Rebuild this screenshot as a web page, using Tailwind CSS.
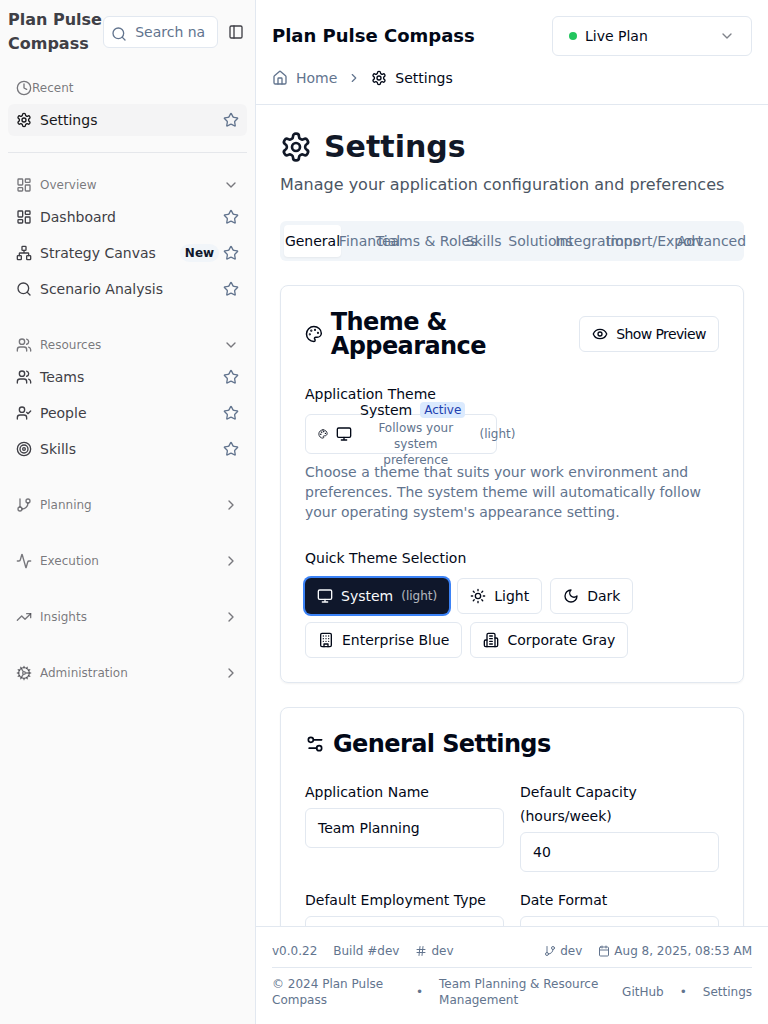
<!DOCTYPE html>
<html lang="en">
<head>
<meta charset="utf-8">
<title>Plan Pulse Compass</title>
<script src="https://cdn.jsdelivr.net/npm/@tailwindcss/browser@4"></script>
</head>
<body class="flex h-[1024px] w-[768px] overflow-hidden bg-white font-['DejaVu_Sans',sans-serif] text-sm text-[#020817]">
<svg class="hidden">
  <symbol id="gear" viewBox="0 0 24 24"><path d="M12.22 2h-.44a2 2 0 0 0-2 2v.18a2 2 0 0 1-1 1.73l-.43.25a2 2 0 0 1-2 0l-.15-.08a2 2 0 0 0-2.73.73l-.22.38a2 2 0 0 0 .73 2.73l.15.1a2 2 0 0 1 1 1.72v.51a2 2 0 0 1-1 1.74l-.15.09a2 2 0 0 0-.73 2.73l.22.38a2 2 0 0 0 2.73.73l.15-.08a2 2 0 0 1 2 0l.43.25a2 2 0 0 1 1 1.73V20a2 2 0 0 0 2 2h.44a2 2 0 0 0 2-2v-.18a2 2 0 0 1 1-1.73l.43-.25a2 2 0 0 1 2 0l.15.08a2 2 0 0 0 2.73-.73l.22-.39a2 2 0 0 0-.73-2.73l-.15-.08a2 2 0 0 1-1-1.74v-.5a2 2 0 0 1 1-1.74l.15-.09a2 2 0 0 0 .73-2.73l-.22-.38a2 2 0 0 0-2.73-.73l-.15.08a2 2 0 0 1-2 0l-.43-.25a2 2 0 0 1-1-1.73V4a2 2 0 0 0-2-2z"/><circle cx="12" cy="12" r="3"/></symbol>
  <symbol id="search" viewBox="0 0 24 24"><circle cx="11" cy="11" r="8"/><path d="m21 21-4.3-4.3"/></symbol>
  <symbol id="panel" viewBox="0 0 24 24"><rect width="18" height="18" x="3" y="3" rx="2"/><path d="M9 3v18"/></symbol>
  <symbol id="clock" viewBox="0 0 24 24"><circle cx="12" cy="12" r="10"/><path d="M12 6v6l4 2"/></symbol>
  <symbol id="star" viewBox="0 0 24 24"><path d="M11.525 2.295a.53.53 0 0 1 .95 0l2.31 4.679a2.123 2.123 0 0 0 1.595 1.16l5.166.756a.53.53 0 0 1 .294.904l-3.736 3.638a2.123 2.123 0 0 0-.611 1.878l.882 5.14a.53.53 0 0 1-.771.56l-4.618-2.428a2.122 2.122 0 0 0-1.973 0L6.396 21.01a.53.53 0 0 1-.77-.56l.881-5.139a2.122 2.122 0 0 0-.611-1.879L2.16 9.795a.53.53 0 0 1 .294-.906l5.165-.755a2.122 2.122 0 0 0 1.597-1.16z"/></symbol>
  <symbol id="dashboard" viewBox="0 0 24 24"><rect width="7" height="9" x="3" y="3" rx="1"/><rect width="7" height="5" x="14" y="3" rx="1"/><rect width="7" height="9" x="14" y="12" rx="1"/><rect width="7" height="5" x="3" y="16" rx="1"/></symbol>
  <symbol id="network" viewBox="0 0 24 24"><rect x="16" y="16" width="6" height="6" rx="1"/><rect x="2" y="16" width="6" height="6" rx="1"/><rect x="9" y="2" width="6" height="6" rx="1"/><path d="M5 16v-3a1 1 0 0 1 1-1h12a1 1 0 0 1 1 1v3M12 12V8"/></symbol>
  <symbol id="users" viewBox="0 0 24 24"><path d="M16 21v-2a4 4 0 0 0-4-4H6a4 4 0 0 0-4 4v2"/><circle cx="9" cy="7" r="4"/><path d="M22 21v-2a4 4 0 0 0-3-3.87M16 3.13a4 4 0 0 1 0 7.75"/></symbol>
  <symbol id="usercheck" viewBox="0 0 24 24"><path d="M16 21v-2a4 4 0 0 0-4-4H6a4 4 0 0 0-4 4v2"/><circle cx="9" cy="7" r="4"/><path d="m16 11 2 2 4-4"/></symbol>
  <symbol id="target" viewBox="0 0 24 24"><circle cx="12" cy="12" r="10"/><circle cx="12" cy="12" r="6"/><circle cx="12" cy="12" r="2"/></symbol>
  <symbol id="branch" viewBox="0 0 24 24"><path d="M6 3v12"/><circle cx="18" cy="6" r="3"/><circle cx="6" cy="18" r="3"/><path d="M18 9a9 9 0 0 1-9 9"/></symbol>
  <symbol id="activity" viewBox="0 0 24 24"><path d="M22 12h-2.48a2 2 0 0 0-1.93 1.46l-2.35 8.36a.25.25 0 0 1-.48 0L9.24 2.18a.25.25 0 0 0-.48 0l-2.35 8.36A2 2 0 0 1 4.49 12H2"/></symbol>
  <symbol id="trend" viewBox="0 0 24 24"><path d="m22 7-8.500 8.500-5-5L2 17"/><path d="M16 7h6v6"/></symbol>
  <symbol id="cog" viewBox="0 0 24 24"><path d="M12 20a8 8 0 1 0 0-16 8 8 0 0 0 0 16Z"/><path d="M12 14a2 2 0 1 0 0-4 2 2 0 0 0 0 4ZM12 2v2M12 22v-2M17 20.660l-1-1.730M11 10.270 7 3.340M20.660 17l-1.730-1M3.340 7l1.730 1M14 12h8M2 12h2M20.660 7l-1.730 1M3.340 17l1.730-1M17 3.340l-1 1.730M11 13.730l-4 6.930"/></symbol>
  <symbol id="down" viewBox="0 0 24 24"><path d="m6 9 6 6 6-6"/></symbol>
  <symbol id="right" viewBox="0 0 24 24"><path d="m9 18 6-6-6-6"/></symbol>
  <symbol id="house" viewBox="0 0 24 24"><path d="M15 21v-8a1 1 0 0 0-1-1h-4a1 1 0 0 0-1 1v8"/><path d="M3 10a2 2 0 0 1 .709-1.528l7-5.999a2 2 0 0 1 2.582 0l7 5.999A2 2 0 0 1 21 10v9a2 2 0 0 1-2 2H5a2 2 0 0 1-2-2z"/></symbol>
  <symbol id="palette" viewBox="0 0 24 24"><circle cx="13.500" cy="6.500" r=".5" fill="currentColor"/><circle cx="17.500" cy="10.500" r=".5" fill="currentColor"/><circle cx="8.500" cy="7.500" r=".5" fill="currentColor"/><circle cx="6.500" cy="12.500" r=".5" fill="currentColor"/><path d="M12 2C6.500 2 2 6.500 2 12s4.500 10 10 10c.926 0 1.648-.746 1.648-1.688 0-.437-.18-.835-.437-1.125-.29-.289-.438-.652-.438-1.125a1.640 1.640 0 0 1 1.668-1.668h1.996c3.051 0 5.555-2.503 5.555-5.554C21.965 6.012 17.461 2 12 2z"/></symbol>
  <symbol id="eye" viewBox="0 0 24 24"><path d="M2.062 12.348a1 1 0 0 1 0-.696 10.750 10.750 0 0 1 19.876 0 1 1 0 0 1 0 .696 10.750 10.750 0 0 1-19.876 0"/><circle cx="12" cy="12" r="3"/></symbol>
  <symbol id="monitor" viewBox="0 0 24 24"><rect width="20" height="14" x="2" y="3" rx="2"/><path d="M8 21h8M12 17v4"/></symbol>
  <symbol id="sun" viewBox="0 0 24 24"><circle cx="12" cy="12" r="4"/><path d="M12 2v2M12 20v2M4.930 4.930l1.410 1.410M17.660 17.660l1.410 1.410M2 12h2M20 12h2M6.340 17.660l-1.410 1.410M19.070 4.930l-1.410 1.410"/></symbol>
  <symbol id="moon" viewBox="0 0 24 24"><path d="M12 3a6 6 0 0 0 9 9 9 9 0 1 1-9-9Z"/></symbol>
  <symbol id="building" viewBox="0 0 24 24"><rect width="16" height="20" x="4" y="2" rx="2"/><path d="M9 22v-4h6v4M8 6h.01M16 6h.01M12 6h.01M12 10h.01M12 14h.01M16 10h.01M16 14h.01M8 10h.01M8 14h.01"/></symbol>
  <symbol id="building2" viewBox="0 0 24 24"><path d="M6 22V4a2 2 0 0 1 2-2h8a2 2 0 0 1 2 2v18Z"/><path d="M6 12H4a2 2 0 0 0-2 2v6a2 2 0 0 0 2 2h2M18 9h2a2 2 0 0 1 2 2v9a2 2 0 0 1-2 2h-2M10 6h4M10 10h4M10 14h4M10 18h4"/></symbol>
  <symbol id="sliders" viewBox="0 0 24 24"><path d="M20 7h-9M14 17H5"/><circle cx="17" cy="17" r="3"/><circle cx="7" cy="7" r="3"/></symbol>
  <symbol id="hash" viewBox="0 0 24 24"><path d="M4 9h16M4 15h16M10 3 8 21M16 3l-2 18"/></symbol>
  <symbol id="calendar" viewBox="0 0 24 24"><path d="M8 2v4M16 2v4M3 10h18"/><rect width="18" height="18" x="3" y="4" rx="2"/></symbol>
</svg>

<aside class="flex w-64 shrink-0 flex-col border-r border-slate-200 bg-[#fafafa] px-2 pt-2 text-[#3f3f46] [&_svg]:size-4 [&_svg]:shrink-0 [&_svg]:fill-none [&_svg]:stroke-current [&_svg]:stroke-2 [&_svg]:[stroke-linecap:round] [&_svg]:[stroke-linejoin:round]">
  <div class="flex h-12 items-center">
    <h2 class="w-[95.200px] shrink-0 text-base font-bold leading-6">Plan Pulse Compass</h2>
    <div class="relative flex h-8 w-[114.800px] shrink-0 items-center rounded-md border border-slate-200 bg-white pl-[31px] pr-3 text-slate-500">
      <svg class="absolute left-[7px] top-[9px]"><use href="#search"/></svg>
      <span class="overflow-hidden whitespace-nowrap">Search navigation</span>
    </div>
    <button class="ml-1 flex size-7 shrink-0 items-center justify-center"><svg><use href="#panel"/></svg></button>
  </div>

  <div class="mt-4 flex h-8 items-center px-2 text-xs text-[#3f3f46]/70"><svg><use href="#clock"/></svg><span>Recent</span></div>
  <div class="flex h-8 items-center gap-2 rounded-md bg-[#f4f4f5] px-2 text-[#18181b]"><svg><use href="#gear"/></svg><span class="flex-1">Settings</span><svg class="text-slate-500"><use href="#star"/></svg></div>
  <div class="mt-4 h-px shrink-0 bg-[#e5e7eb]"></div>

  <nav class="mt-4 flex flex-col gap-6">
    <section>
      <div class="flex h-8 items-center gap-2 px-2 text-xs text-[#3f3f46]/70"><svg><use href="#dashboard"/></svg><span class="flex-1">Overview</span><svg><use href="#down"/></svg></div>
      <ul class="flex flex-col gap-1">
        <li class="flex h-8 items-center gap-2 px-2"><svg><use href="#dashboard"/></svg><span class="flex-1">Dashboard</span><svg class="text-slate-500"><use href="#star"/></svg></li>
        <li class="flex h-8 items-center gap-2 px-2"><svg><use href="#network"/></svg><span class="flex-1 whitespace-nowrap">Strategy Canvas</span><span class="-mr-1 flex h-[18px] w-[39px] items-center justify-center rounded-full bg-slate-100 text-xs font-bold text-slate-900">New</span><svg class="text-slate-500"><use href="#star"/></svg></li>
        <li class="flex h-8 items-center gap-2 px-2"><svg><use href="#search"/></svg><span class="flex-1">Scenario Analysis</span><svg class="text-slate-500"><use href="#star"/></svg></li>
      </ul>
    </section>
    <section>
      <div class="flex h-8 items-center gap-2 px-2 text-xs text-[#3f3f46]/70"><svg><use href="#users"/></svg><span class="flex-1">Resources</span><svg><use href="#down"/></svg></div>
      <ul class="flex flex-col gap-1">
        <li class="flex h-8 items-center gap-2 px-2"><svg><use href="#users"/></svg><span class="flex-1">Teams</span><svg class="text-slate-500"><use href="#star"/></svg></li>
        <li class="flex h-8 items-center gap-2 px-2"><svg><use href="#usercheck"/></svg><span class="flex-1">People</span><svg class="text-slate-500"><use href="#star"/></svg></li>
        <li class="flex h-8 items-center gap-2 px-2"><svg><use href="#target"/></svg><span class="flex-1">Skills</span><svg class="text-slate-500"><use href="#star"/></svg></li>
      </ul>
    </section>
    <div class="flex h-8 items-center gap-2 px-2 text-xs text-[#3f3f46]/70"><svg><use href="#branch"/></svg><span class="flex-1">Planning</span><svg><use href="#right"/></svg></div>
    <div class="flex h-8 items-center gap-2 px-2 text-xs text-[#3f3f46]/70"><svg><use href="#activity"/></svg><span class="flex-1">Execution</span><svg><use href="#right"/></svg></div>
    <div class="flex h-8 items-center gap-2 px-2 text-xs text-[#3f3f46]/70"><svg><use href="#trend"/></svg><span class="flex-1">Insights</span><svg><use href="#right"/></svg></div>
    <div class="flex h-8 items-center gap-2 px-2 text-xs text-[#3f3f46]/70"><svg><use href="#cog"/></svg><span class="flex-1">Administration</span><svg><use href="#right"/></svg></div>
  </nav>
</aside>

<div class="flex h-full w-[512px] flex-col [&_svg]:shrink-0 [&_svg]:fill-none [&_svg]:stroke-current [&_svg]:stroke-2 [&_svg]:[stroke-linecap:round] [&_svg]:[stroke-linejoin:round]">
  <header class="h-[105px] shrink-0 border-b border-slate-200 px-4 pt-4">
    <div class="flex items-center justify-between">
      <h1 class="text-lg font-bold">Plan Pulse Compass</h1>
      <div class="flex h-10 w-[200px] items-center gap-2 rounded-md border border-slate-200 px-4">
        <span class="size-2 rounded-full bg-[#22c55e]"></span><span class="flex-1">Live Plan</span><svg class="size-4 opacity-50"><use href="#down"/></svg>
      </div>
    </div>
    <div class="mt-3 flex h-5 items-center gap-2.5 text-slate-500">
      <span class="flex items-center gap-2"><svg class="size-4"><use href="#house"/></svg>Home</span>
      <svg class="size-3.5"><use href="#right"/></svg>
      <span class="flex items-center gap-2 text-[#020817]"><svg class="size-4"><use href="#gear"/></svg>Settings</span>
    </div>
  </header>

  <main class="min-h-0 flex-1 overflow-hidden p-6">
    <div class="flex h-9 items-center gap-3 text-[#111827]"><svg class="size-8"><use href="#gear"/></svg><h2 class="text-3xl font-bold">Settings</h2></div>
    <p class="mt-2 text-base text-[#4b5563]">Manage your application configuration and preferences</p>

    <div class="mt-6 grid h-10 grid-cols-8 rounded-md bg-slate-100 p-1 text-slate-500 [&>span]:flex [&>span]:min-w-0 [&>span]:items-center [&>span]:justify-center [&>span]:whitespace-nowrap">
      <span class="rounded-sm bg-white text-[#020817] shadow-xs">General</span><span>Financial</span><span>Teams &amp; Roles</span><span>Skills</span><span>Solutions</span><span>Integrations</span><span>Import/Export</span><span>Advanced</span>
    </div>

    <section class="mt-6 rounded-lg border border-slate-200 p-6 shadow-xs">
      <div class="flex items-center justify-between">
        <h3 class="flex items-center gap-2 text-2xl font-bold leading-none tracking-tight"><svg class="h-5 w-[17.800px]"><use href="#palette"/></svg><span>Theme &amp;<br>Appearance</span></h3>
        <button class="flex h-9 w-[140px] items-center justify-center gap-2 whitespace-nowrap rounded-md border border-slate-200 px-3 tracking-[-0.6px]"><svg class="size-4"><use href="#eye"/></svg>Show Preview</button>
      </div>
      <div class="mt-6 leading-6">Application Theme</div>
      <div class="mt-2 flex h-10 w-48 items-center gap-2 rounded-md border border-slate-200 px-3">
        <svg class="size-[10px]"><use href="#palette"/></svg>
        <svg class="size-4"><use href="#monitor"/></svg>
        <div class="w-[111.500px] shrink-0 text-center">
          <div class="flex h-5 items-center gap-2"><span>System</span><span class="rounded-sm bg-blue-100 px-1 text-xs text-[#1e40af]">Active</span></div>
          <div class="px-4 text-xs text-slate-500">Follows your system preference</div>
        </div>
        <span class="text-xs text-slate-500">(light)</span>
      </div>
      <p class="mt-2 text-slate-500">Choose a theme that suits your work environment and preferences. The system theme will automatically follow your operating system's appearance setting.</p>
      <div class="mt-6 leading-6">Quick Theme Selection</div>
      <div class="mt-2 flex flex-wrap gap-2 [&>button]:flex [&>button]:h-9 [&>button]:items-center [&>button]:gap-2 [&>button]:rounded-md [&>button]:px-3">
        <button class="bg-slate-900 text-slate-50 ring-2 ring-[#3b82f6]"><svg class="size-4"><use href="#monitor"/></svg>System<span class="text-xs opacity-70">(light)</span></button>
        <button class="border border-slate-200"><svg class="size-4"><use href="#sun"/></svg>Light</button>
        <button class="border border-slate-200"><svg class="size-4"><use href="#moon"/></svg>Dark</button>
        <button class="border border-slate-200"><svg class="size-4"><use href="#building"/></svg>Enterprise Blue</button>
        <button class="border border-slate-200"><svg class="size-4"><use href="#building2"/></svg>Corporate Gray</button>
      </div>
    </section>

    <section class="mt-6 rounded-lg border border-slate-200 p-6 shadow-xs">
      <h3 class="flex items-center gap-2 text-2xl font-bold leading-none tracking-tight"><svg class="size-5"><use href="#sliders"/></svg>General Settings</h3>
      <div class="mt-6 grid grid-cols-2 gap-4 leading-6">
        <div><div>Application Name</div><div class="mt-1 flex h-10 items-center rounded-md border border-slate-200 px-3">Team Planning</div></div>
        <div><div>Default Capacity (hours/week)</div><div class="mt-1 flex h-10 items-center rounded-md border border-slate-200 px-3">40</div></div>
        <div><div>Default Employment Type</div><div class="mt-1 h-10 rounded-md border border-slate-200"></div></div>
        <div><div>Date Format</div><div class="mt-1 h-10 rounded-md border border-slate-200"></div></div>
      </div>
    </section>
  </main>

  <footer class="shrink-0 border-t border-slate-200 bg-white p-4 text-xs text-slate-500">
    <div class="flex items-center justify-between">
      <div class="flex gap-4"><span>v0.0.22</span><span>Build #dev</span><span class="flex items-center gap-1"><svg class="size-3"><use href="#hash"/></svg>dev</span></div>
      <div class="flex gap-4"><span class="flex items-center gap-1"><svg class="size-3"><use href="#branch"/></svg>dev</span><span class="flex items-center gap-1"><svg class="size-3"><use href="#calendar"/></svg>Aug 8, 2025, 08:53 AM</span></div>
    </div>
    <div class="mt-2 flex items-center justify-between border-t border-slate-200 pt-2">
      <div class="flex items-center gap-4"><span class="w-32">© 2024 Plan Pulse Compass</span><span>•</span><span class="w-[167px]">Team Planning &amp; Resource Management</span></div>
      <div class="flex items-center gap-4"><span>GitHub</span><span>•</span><span>Settings</span></div>
    </div>
  </footer>
</div>
</body>
</html>
